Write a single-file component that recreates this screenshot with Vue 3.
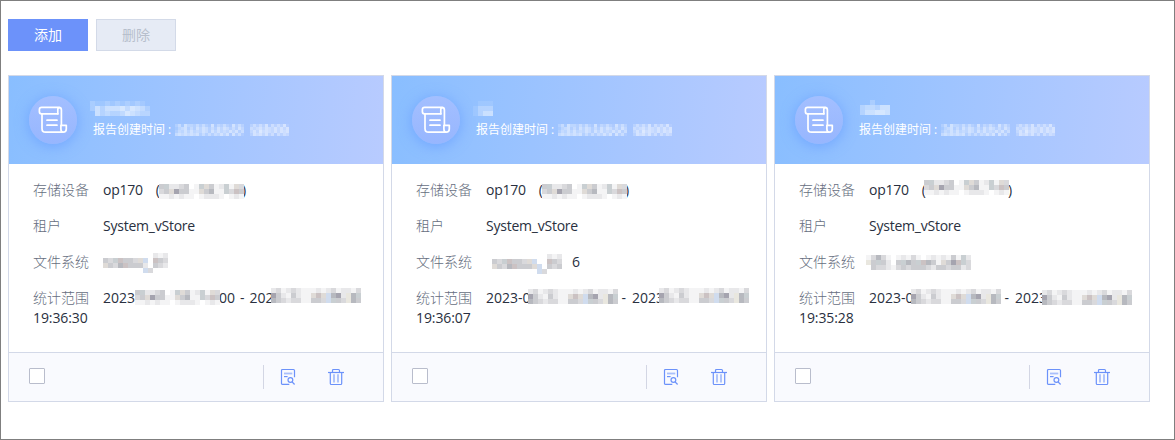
<script setup>
import { h } from 'vue'

const palette = {
  a: '#f4f4f5', b: '#e8e8ea', c: '#d9d9dc', d: '#cbccd0', e: '#b7b9bf', f: '#a5a4af',
  g: '#c9cfd2', h: '#dfdbd7', i: '#d0dcee', j: '#cbc2c3', k: '#e9e7df',
}
const fill = (ch) => (palette[ch] ? palette[ch] : `rgba(255,255,255,${Number(ch) / 10})`)

// Pixelated block covering private values
const Mosaic = (props) => {
  const s = props.size || 5
  const w = props.rows[0].length * s
  const ht = props.rows.length * s
  const rects = []
  props.rows.forEach((row, y) => {
    ;[...row].forEach((ch, x) => {
      if (ch !== '.') rects.push(h('rect', { x: x * s, y: y * s, width: s, height: s, fill: fill(ch) }))
    })
  })
  return h('svg', { width: w, height: ht, viewBox: `0 0 ${w} ${ht}`, 'shape-rendering': 'crispEdges' }, rects)
}
Mosaic.props = ['rows', 'size']

const ip = ['dgbbcd.aghdabgahc', 'cdhfddaahdeaagcjd', 'aababaa.abbba.aba']
const date = ['bcabcbaaababcabbac', 'fdbadbaahjhiefbkeg', 'edcbccaaddcigdcked']
const fsA = ['..........bab', 'dcgjddchi.jdc', 'hdcejdddb.dcb', '........ic...']
const fsB = ['...........bab', 'dcgjddchi..jdc', 'hdcejdddhi.dcd', '.........ic...']
const fsC = ['aceca.abaca.ababadagb', 'kdgdb.dgedgjedahdfjgc', '.dccbacdcdddcbddcddbc']

const timeRows = [
  '24153324242151324215242..2424251424251',
  '13452425354242535424253..4345354353535',
  '24353534354253534353524..3536454353545',
  '45454545242424353515241..2545352414243',
]

const cards = [
  {
    title: { x: 81, y: 25, rows: ['21121212121.', '253555646542', '.53433465433'] },
    time: { x: 166, y: 48, rows: timeRows },
    ip: { x: 150, y: 20, rows: ip },
    fs: { x: 94, y: 89, rows: fsA },
    fsTail: null,
    range: [{ t: '2023' }, { gap: 84 }, { t: '00' }, { gap: 5 }, { t: '-' }, { gap: 5 }, { t: '202' }],
    end: '19:36:30',
    masks: [
      { x: 126, y: 126, rows: ip },
      { x: 262, y: 124, rows: date },
    ],
  },
  {
    title: { x: 81, y: 25, rows: ['.111', '1333', '1355'] },
    time: { x: 166, y: 48, rows: timeRows },
    ip: { x: 150, y: 20, rows: ip },
    fs: { x: 100, y: 90, rows: fsB },
    fsTail: '6',
    range: [{ t: '2023-0' }, { gap: 91 }, { t: '-' }, { gap: 6 }, { t: '2023' }],
    end: '19:36:07',
    masks: [
      { x: 136, y: 125, rows: date },
      { x: 267, y: 124, rows: date },
    ],
  },
  {
    title: { x: 85, y: 24, rows: ['..2...', '344355', '355665'] },
    time: { x: 166, y: 48, rows: timeRows },
    ip: { x: 149, y: 16, rows: ip },
    fs: { x: 91, y: 91, rows: fsC },
    fsTail: null,
    range: [{ t: '2023-0' }, { gap: 91 }, { t: '-' }, { gap: 6 }, { t: '2023' }],
    end: '19:35:28',
    masks: [
      { x: 136, y: 125, rows: date },
      { x: 267, y: 126, rows: date },
    ],
  },
]
const pos = (m) => ({ left: m.x + 'px', top: m.y + 'px' })
const bodyMasks = (c) => [c.ip, c.fs, ...c.masks]
</script>

<template>
  <div class="page">
    <div class="toolbar">
      <button class="btn primary">添加</button>
      <button class="btn disabled" disabled>删除</button>
    </div>
    <div class="cards">
      <section v-for="(c, i) in cards" :key="i" class="card">
        <header class="head">
          <div class="badge">
            <svg width="30" height="28" viewBox="0 0 30 28" fill="none" stroke="#fff" stroke-width="1.7" stroke-linecap="round" stroke-linejoin="round">
              <path d="M20 7.8H3.4Q1.4 7.8 1.4 5.8V3.6Q1.4 1.4 3.6 1.4H20.8Q23.4 1.4 23.4 4V19.3" />
              <path d="M19.8 7.8V3.6Q19.8 1.6 21.4 1.6" />
              <path d="M4 8V22.4Q4 26.2 7.6 26.2H25.2Q28.3 26.2 28.3 23V19.3H22.9V23Q22.9 26 25.2 26.2" />
              <path d="M9 14.2H19M9 19.2H19" />
            </svg>
          </div>
          <div class="created">报告创建时间 :</div>
          <Mosaic class="mask" :rows="c.title.rows" :style="pos(c.title)" />
          <Mosaic class="mask" :rows="c.time.rows" :size="3" :style="pos(c.time)" />
        </header>
        <div class="body">
          <div class="row"><span class="label">存储设备</span><span class="name">op170</span><span class="open">(</span><span class="close">)</span></div>
          <div class="row"><span class="label">租户</span><span class="name">System_vStore</span></div>
          <div class="row"><span class="label">文件系统</span><span v-if="c.fsTail" class="tail">{{ c.fsTail }}</span></div>
          <div class="row"><span class="label">统计范围</span><template v-for="(s, k) in c.range" :key="k"><span v-if="s.t">{{ s.t }}</span><span v-else class="gap" :style="{ width: s.gap + 'px' }"></span></template></div>
          <div class="end">{{ c.end }}</div>
          <Mosaic v-for="(m, k) in bodyMasks(c)" :key="'m' + k" class="mask" :rows="m.rows" :style="pos(m)" />
        </div>
        <footer class="foot">
          <span class="check"></span>
          <span class="divider"></span>
          <svg class="view" width="16" height="18" viewBox="0 0 16 18" fill="none" stroke="#6c92fa" stroke-width="1.2" stroke-linejoin="round">
            <path d="M9.3 16.4H2.5Q1.5 16.4 1.5 15.4V2.5Q1.5 1.5 2.5 1.5H13.5Q14.5 1.5 14.5 2.5V9.3" />
            <path d="M4 5.5H12.3" stroke="#a9bffb" stroke-width="1.8" />
            <path d="M4 8.6H7.6" />
            <circle cx="10.4" cy="12" r="2.4" />
            <path d="M12.1 13.8L14.6 16.5" />
          </svg>
          <svg class="trash" width="16" height="18" viewBox="0 0 16 18" fill="none" stroke="#6c92fa" stroke-width="1.2" stroke-linejoin="round">
            <path d="M0 4.5H16" />
            <path d="M4.5 4.5V2.5Q4.5 1.5 5.5 1.5H10.5Q11.5 1.5 11.5 2.5V4.5" />
            <path d="M2.3 4.5V15.4Q2.3 16.5 3.4 16.5H12.6Q13.7 16.5 13.7 15.4V4.5" />
            <path d="M6 6.3V14.5M10 6.3V14.5" stroke="#a9bffb" stroke-width="1.8" />
          </svg>
        </footer>
      </section>
    </div>
  </div>
</template>

<style scoped>
.page {
  box-sizing: border-box;
  width: 1175px;
  height: 440px;
  border: 1px solid #7f7f7f;
  background: #fff;
  padding: 18px 0 0 7px;
  font: 14px/20px 'Open Sans', 'Noto Sans CJK SC', sans-serif;
  color: #293040;
  overflow: hidden;
}
.toolbar { display: flex; gap: 8px; margin-bottom: 24px; }
.btn {
  box-sizing: border-box;
  width: 80px;
  height: 32px;
  padding: 0;
  border: 1px solid #6c92fa;
  background: #6c92fa;
  color: #fff;
  font: inherit;
}
.btn.disabled { background: #e6ebf5; border-color: #d3dae8; color: #b7bfcc; }
.cards { display: flex; gap: 7px; }
.card {
  box-sizing: border-box;
  width: 376px;
  height: 327px;
  border: 1px solid #d3d9e8;
  display: flex;
  flex-direction: column;
}
.head {
  position: relative;
  display: flex;
  height: 88px;
  background: linear-gradient(95deg, #89beff 0%, #b8cbff 100%);
}
.badge {
  display: flex;
  align-items: center;
  justify-content: center;
  width: 48px;
  height: 48px;
  margin: 20px 16px 0 20px;
  border-radius: 50%;
  background: linear-gradient(#a3bfff, #97b6fe);
  box-shadow: 0 2px 14px rgba(92, 146, 255, 0.6);
}
.created { margin-top: 45px; font-size: 12px; line-height: 18px; color: #fff; white-space: pre; }
.mask { position: absolute; display: block; }
.body {
  position: relative;
  flex: 1;
  padding: 16px 24px 0;
  white-space: nowrap;
}
.row { display: flex; height: 20px; margin-bottom: 16px; }
.row:nth-child(4) { margin-bottom: 0; }
.label { width: 70px; color: #666e7e; font-weight: 300; }
.name { letter-spacing: -0.23px; }
.open { margin-left: 13px; }
.close { margin-left: 82px; }
.tail { margin-left: 86px; }
.end { letter-spacing: -0.1px; }
.gap { display: inline-block; flex: none; }
.foot {
  display: flex;
  align-items: center;
  height: 48px;
  border-top: 1px solid #d3d9e8;
  background: #f9fafe;
}
.check { box-sizing: border-box; width: 16px; height: 16px; margin: 0 auto 2px 20px; border: 1px solid #b9bdcc; background: #fff; border-radius: 1px; }
.divider { width: 1px; height: 24px; background: #d3d6e4; }
.view { margin: 0 32px 0 16px; }
.trash { margin-right: 39px; }
</style>
